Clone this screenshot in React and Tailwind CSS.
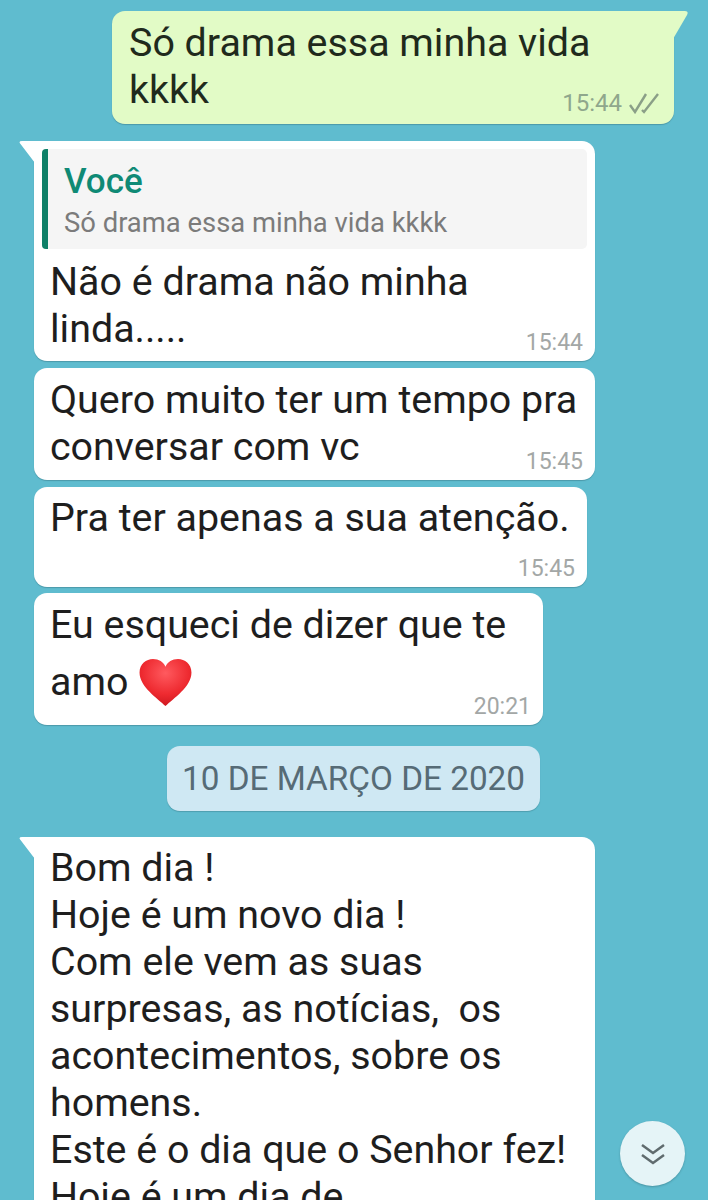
const font = { fontFamily: 'Roboto, sans-serif' }

function Time({ children }) {
  return <span className="text-[23px] leading-none text-[#a3a7a6]">{children}</span>
}

function TailLeft() {
  return (
    <svg className="absolute left-[-15px] top-0" width="16" height="24" viewBox="0 0 16 24">
      <path d="M16 0H3Q-1 0 1.500 3L16 22Z" fill="#fff" />
    </svg>
  )
}

function Bubble({ className, time, children, width, tail }) {
  return (
    <div className={`relative ml-[34px] rounded-[13px] bg-white shadow-[0_1px_1px_rgba(40,90,100,0.35)] ${tail ? 'rounded-tl-none' : ''} ${width} ${className}`}>
      {tail ? <TailLeft /> : null}
      {children}
      {time ? <div className="absolute bottom-[7px] right-[12px] flex"><Time>{time}</Time></div> : null}
    </div>
  )
}

function Heart() {
  return (
    <svg className="absolute left-[104px] top-[65px]" width="55" height="50" viewBox="0 0 56 52">
      <defs>
        <radialGradient id="h" cx="0.5" cy="0.3" r="0.75">
          <stop offset="0" stopColor="#ff5a5f" />
          <stop offset="0.6" stopColor="#ee2a30" />
          <stop offset="1" stopColor="#c9151c" />
        </radialGradient>
      </defs>
      <path d="M28 50C20 42 1 30 1 15C1 6 8 1 15 1C21 1 26 4 28 9C30 4 35 1 41 1C48 1 55 6 55 15C55 30 36 42 28 50Z" fill="url(#h)" />
    </svg>
  )
}

export default function App() {
  return (
    <div className="relative h-[1200px] w-[708px] overflow-hidden bg-[#5fbccf] text-[39.4px] leading-[47px] text-[#1e1e1e]" style={font}>
      <div className="relative ml-[112px] mt-[11px] h-[113px] w-[562px] rounded-[13px] rounded-tr-none bg-[#e2fbc6] pl-[17px] pt-[8px] text-[#1f2a1c] shadow-[0_1px_1px_rgba(40,90,100,0.35)]">
        <svg className="absolute right-[-14px] top-0" width="15" height="30" viewBox="0 0 15 30">
          <path d="M0 0H12Q16 0 14 4L0 28Z" fill="#e2fbc6" />
        </svg>
        <p>Só drama essa minha vida<br />kkkk</p>
        <div className="absolute bottom-[9px] right-[15px] flex items-center gap-[7px]">
          <span className="text-[24px] leading-none text-[#8fa78c]">15:44</span>
          <svg width="30" height="22" viewBox="0 0 30 22" fill="none" stroke="#8a9f87" strokeWidth="2.400">
            <path d="M1 13L6 20L17 2" />
            <path d="M13 18L15 20L29 2" />
          </svg>
        </div>
      </div>

      <Bubble tail time="15:44" width="w-[561px]" className="mt-[17px] h-[220px] p-[8px]">
        <div className="relative h-[100px] rounded-[5px] bg-[#f5f5f5] pl-[22px] pt-[13px]">
          <div className="absolute bottom-0 left-0 top-0 w-[6px] rounded-l-[4px] bg-[#0f8068]" />
          <p className="text-[35px] font-medium leading-[40px] text-[#0f8a75]">Você</p>
          <p className="text-[27.400px] leading-[42px] text-[#7b7b7b]">Só drama essa minha vida kkkk</p>
        </div>
        <p className="pl-[8px] pt-[9px]">Não é drama não minha<br />linda.....</p>
      </Bubble>

      <Bubble time="15:45" width="w-[561px]" className="mt-[7px] h-[112px] pl-[16px] pt-[8px]">
        <p>Quero muito ter um tempo pra<br />conversar com vc</p>
      </Bubble>

      <Bubble time="15:45" width="w-[553px]" className="mt-[7px] h-[100px] pl-[16px] pt-[7px]">
        <p>Pra ter apenas a sua atenção.</p>
      </Bubble>

      <Bubble time="20:21" width="w-[509px]" className="mt-[6px] h-[132px] pl-[16px] pt-[3px]">
        <p className="leading-[57px]">Eu esqueci de dizer que te<br />amo</p>
        <Heart />
      </Bubble>

      <div className="ml-[167px] mt-[21px] flex h-[65px] w-[373px] items-center justify-center rounded-[13px] bg-[#cfe8f3] text-[33.300px] text-[#566b76] shadow-[0_1px_1px_rgba(40,90,100,0.3)]">
        10 DE MARÇO DE 2020
      </div>

      <Bubble tail width="w-[561px]" className="mt-[26px] h-[420px] pl-[16px] pt-[7px]">
        <p>
          Bom dia !<br />
          Hoje é um novo dia !<br />
          Com ele vem as suas<br />
          surpresas, as notícias,&nbsp; os<br />
          acontecimentos, sobre os<br />
          homens.<br />
          Este é o dia que o Senhor fez!<br />
          Hoje é um dia de
        </p>
      </Bubble>

      <div className="absolute left-[620px] top-[1121px] flex h-[65px] w-[65px] items-center justify-center rounded-full bg-[#e5f4f7] shadow-[0_1px_2px_rgba(40,90,100,0.4)]">
        <svg width="26" height="24" viewBox="0 0 26 24" fill="none" stroke="#5f6b6e" strokeWidth="2.500">
          <path d="M2 3L13 11L24 3" />
          <path d="M2 13L13 21L24 13" />
        </svg>
      </div>
    </div>
  )
}
